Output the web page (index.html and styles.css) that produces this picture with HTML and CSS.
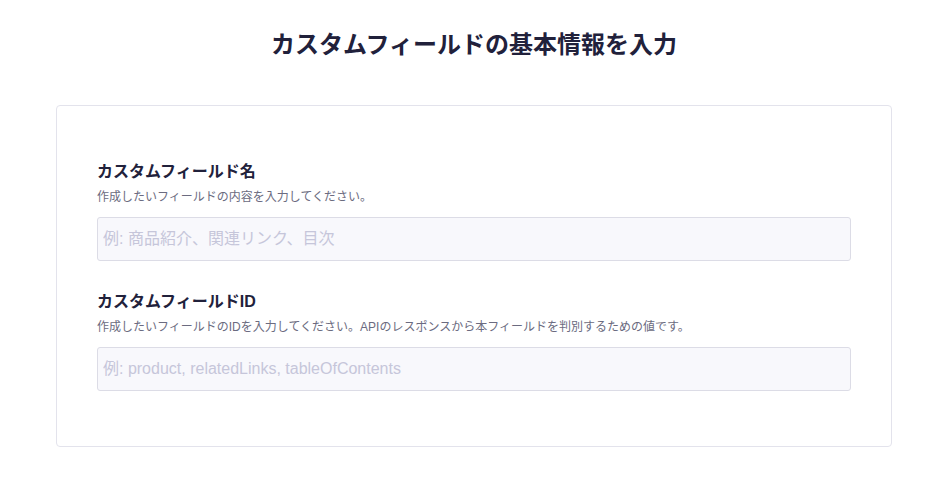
FILE: index.html
```html
<!DOCTYPE html>
<html lang="ja">
<head>
<meta charset="utf-8">
<title>カスタムフィールドの基本情報を入力</title>
<link rel="stylesheet" href="styles.css">
</head>
<body>
<main class="page">
  <h1 class="page-title">カスタムフィールドの基本情報を入力</h1>
  <section class="card">
    <div class="field">
      <label class="field-label" for="name">カスタムフィールド名</label>
      <p class="field-desc">作成したいフィールドの内容を入力してください。</p>
      <input class="field-input" id="name" type="text" placeholder="例: 商品紹介、関連リンク、目次">
    </div>
    <div class="field">
      <label class="field-label" for="fid">カスタムフィールドID</label>
      <p class="field-desc">作成したいフィールドのIDを入力してください。APIのレスポンスから本フィールドを判別するための値です。</p>
      <input class="field-input" id="fid" type="text" placeholder="例: product, relatedLinks, tableOfContents">
    </div>
  </section>
</main>
</body>
</html>
```
FILE: styles.css
```css
* { box-sizing: border-box; }
html, body {
  margin: 0;
  background: #ffffff;
  font-family: "Liberation Sans", "Noto Sans CJK JP", sans-serif;
  color: #21213b;
}
.page {
  padding-top: 27px;
  margin: 0 43px 0 56px;
}
.page-title {
  margin: 0 0 42px;
  text-align: center;
  font-size: 24px;
  line-height: 36px;
  font-weight: 700;
  color: #21213b;
}
.card {
  border: 1px solid #e3e3ec;
  border-radius: 4px;
  padding: 54px 40px 55px;
  display: flex;
  flex-direction: column;
  gap: 29px;
}
.field {
  display: flex;
  flex-direction: column;
}
.field-label {
  font-size: 16px;
  line-height: 24px;
  font-weight: 700;
  color: #21213b;
}
.field-desc {
  margin: 4px 0 11px;
  font-size: 12px;
  line-height: 18px;
  color: #6b6b80;
}
.field-input {
  width: 100%;
  height: 44px;
  border: 1px solid #dcdce6;
  border-radius: 3px;
  background: #f8f8fc;
  padding: 0 5px;
  font-family: "Liberation Sans", "Noto Sans CJK JP", sans-serif;
  font-size: 16px;
  color: #21213b;
  outline: none;
}
.field-input::placeholder {
  color: #c6c6da;
}
```
